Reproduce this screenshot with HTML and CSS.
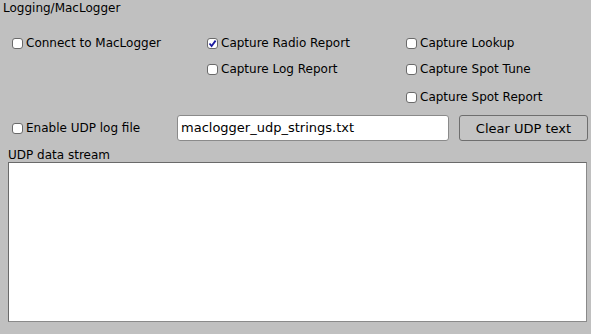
FILE: index.html
```html
<!DOCTYPE html>
<html lang="en">
<head>
    <meta charset="UTF-8">
    <title>Logging/MacLogger</title>
    <link rel="stylesheet" href="styles.css">
</head>
<body>
    <div class="panel">
        <div class="title">Logging/MacLogger</div>

        <div class="options">
            <label class="check"><span class="box"></span>Connect to MacLogger</label>
            <label class="check"><span class="box"><svg width="9" height="9" viewBox="0 0 9 9"><path d="M1.5 4.5 L3.6 7 L7.6 1.6" fill="none" stroke="#1a1aa0" stroke-width="1.8"/></svg></span>Capture Radio Report</label>
            <label class="check"><span class="box"></span>Capture Lookup</label>

            <span></span>
            <label class="check"><span class="box"></span>Capture Log Report</label>
            <label class="check"><span class="box"></span>Capture Spot Tune</label>

            <span></span>
            <span></span>
            <label class="check"><span class="box"></span>Capture Spot Report</label>
        </div>

        <div class="udp-row">
            <label class="check udp-check"><span class="box"></span>Enable UDP log file</label>
            <div class="file-input">maclogger_udp_strings.txt</div>
            <button class="clear-button">Clear UDP text</button>
        </div>

        <div class="stream-label">UDP data stream</div>
        <div class="stream"></div>
    </div>
</body>
</html>
```

FILE: styles.css
```css
body {
    margin: 0;
    padding: 0;
    background-color: #c0c0c0;
    font-family: "DejaVu Sans", sans-serif;
    font-size: 12px;
    color: #000;
}
.panel {
    width: 591px;
    height: 334px;
}
.title {
    padding: 1px 0 0 3px;
    line-height: 15px;
}
.options {
    display: grid;
    grid-template-columns: 195px 199px auto;
    grid-template-rows: 26px 26px 30px;
    margin: 14px 0 0 12px;
}
.check {
    display: flex;
    align-items: center;
    white-space: nowrap;
}
.box {
    display: inline-flex;
    align-items: center;
    justify-content: center;
    box-sizing: border-box;
    width: 11px;
    height: 11px;
    margin-right: 3px;
    background-color: #fff;
    border: 1px solid #6a6a6a;
    border-radius: 3px;
}
.udp-row {
    display: flex;
    align-items: center;
    margin-top: 3px;
    height: 26px;
}
.udp-check {
    width: 165px;
    padding-left: 12px;
}
.file-input {
    box-sizing: border-box;
    width: 272px;
    height: 26px;
    line-height: 24px;
    padding-left: 3px;
    background-color: #fff;
    border: 1px solid #8a8a8a;
    border-radius: 3px;
    font-size: 13px;
}
.clear-button {
    box-sizing: border-box;
    width: 129px;
    height: 26px;
    margin-left: 10px;
    background-color: #c4c4c4;
    border: 1px solid #6e6e6e;
    border-radius: 3px;
    font-family: "DejaVu Sans", sans-serif;
    font-size: 13px;
    color: #000;
    padding: 0;
}
.stream-label {
    padding: 7px 0 0 8px;
    line-height: 14px;
}
.stream {
    box-sizing: border-box;
    width: 579px;
    height: 160px;
    margin-left: 8px;
    background-color: #fff;
    border: 1px solid #8a8a8a;
    border-top-color: #6a6a6a;
    border-left-color: #6a6a6a;
}
```
